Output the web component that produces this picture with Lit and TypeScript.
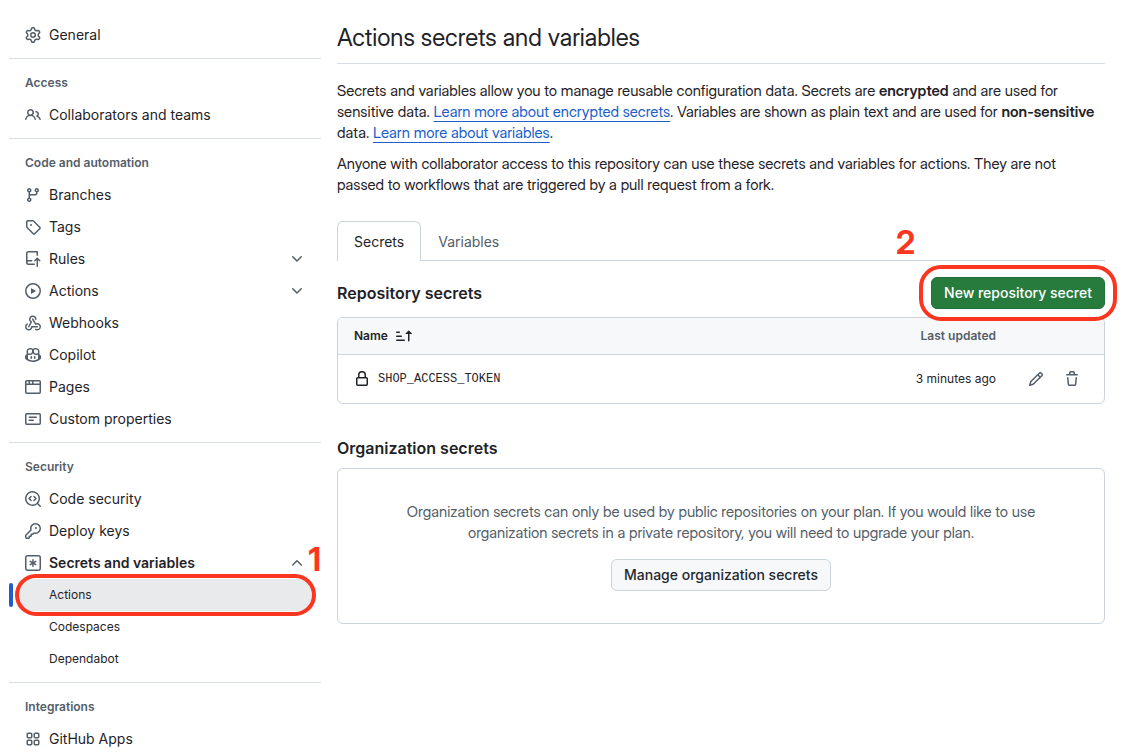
import { LitElement, html, css, svg, nothing } from "lit";
import { customElement, property } from "lit/decorators.js";
import { classMap } from "lit/directives/class-map.js";

const appTile = (x: number, y: number) =>
  `M${x} ${y + 1.75}c0-.966.784-1.75 1.75-1.75h2.5c.966 0 1.75.784 1.75 1.75v2.5a1.75 1.75 0 0 1-1.75 1.75h-2.5a1.75 1.75 0 0 1-1.75-1.75Zm1.75-.25a.25.25 0 0 0-.25.25v2.5c0 .138.112.25.25.25h2.5a.25.25 0 0 0 .25-.25v-2.5a.25.25 0 0 0-.25-.25Z`;

const ICONS: Record<string, string> = {
  gear: "M8 0a8.2 8.2 0 0 1 .701.031C9.444.095 9.99.645 10.16 1.29l.288 1.107c.018.066.079.158.212.224.231.114.454.243.668.386.123.082.233.09.299.071l1.103-.303c.644-.176 1.392.021 1.82.63.27.385.506.792.704 1.218.315.675.111 1.422-.364 1.891l-.814.806c-.049.048-.098.147-.088.294.016.257.016.515 0 .772-.01.147.038.246.088.294l.814.806c.475.469.679 1.216.364 1.891a7.977 7.977 0 0 1-.704 1.217c-.428.61-1.176.807-1.82.63l-1.102-.302c-.067-.019-.177-.011-.3.071a5.909 5.909 0 0 1-.668.386c-.133.066-.194.158-.211.224l-.29 1.106c-.168.646-.715 1.196-1.458 1.26a8.006 8.006 0 0 1-1.402 0c-.743-.064-1.289-.614-1.458-1.26l-.289-1.106c-.018-.066-.079-.158-.212-.224a5.738 5.738 0 0 1-.668-.386c-.123-.082-.233-.09-.299-.071l-1.103.303c-.644.176-1.392-.021-1.82-.63a8.12 8.12 0 0 1-.704-1.218c-.315-.675-.111-1.422.363-1.891l.815-.806c.05-.048.098-.147.088-.294a6.214 6.214 0 0 1 0-.772c.01-.147-.038-.246-.088-.294l-.815-.806C.635 6.045.431 5.298.746 4.623a7.92 7.92 0 0 1 .704-1.217c.428-.61 1.176-.807 1.82-.63l1.102.302c.067.019.177.011.3-.071.214-.143.437-.272.668-.386.133-.066.194-.158.211-.224l.29-1.106C6.009.645 6.556.095 7.299.03 7.53.01 7.764 0 8 0Zm-.571 1.525c-.036.003-.108.036-.137.146l-.289 1.105c-.147.561-.549.967-.998 1.189-.173.086-.34.183-.5.29-.417.278-.97.423-1.529.27l-1.103-.303c-.109-.03-.175.016-.195.045-.22.312-.412.644-.573.99-.014.031-.021.11.059.19l.815.806c.411.406.562.957.53 1.456a4.709 4.709 0 0 0 0 .582c.032.499-.119 1.05-.53 1.456l-.815.806c-.081.08-.073.159-.059.19.162.346.353.677.573.989.02.03.085.076.195.046l1.102-.303c.56-.153 1.113-.008 1.53.27.161.107.328.204.501.29.447.222.85.629.997 1.189l.289 1.105c.029.109.101.143.137.146a6.6 6.6 0 0 0 1.142 0c.036-.003.108-.036.137-.146l.289-1.105c.147-.561.549-.967.998-1.189.173-.086.34-.183.5-.29.417-.278.97-.423 1.529-.27l1.103.303c.109.029.175-.016.195-.045.22-.313.411-.644.573-.99.014-.031.021-.11-.059-.19l-.815-.806c-.411-.406-.562-.957-.53-1.456a4.709 4.709 0 0 0 0-.582c-.032-.499.119-1.05.53-1.456l.815-.806c.081-.08.073-.159.059-.19a6.464 6.464 0 0 0-.573-.989c-.02-.03-.085-.076-.195-.046l-1.102.303c-.56.153-1.113.008-1.53-.27a4.44 4.44 0 0 0-.501-.29c-.447-.222-.85-.629-.997-1.189l-.289-1.105c-.029-.11-.101-.143-.137-.146a6.6 6.6 0 0 0-1.142 0ZM11 8a3 3 0 1 1-6 0 3 3 0 0 1 6 0ZM9.5 8a1.5 1.5 0 1 0-3.001.001A1.5 1.5 0 0 0 9.5 8Z",
  people: "M2 5.5a3.5 3.5 0 1 1 5.898 2.549 5.508 5.508 0 0 1 3.034 4.084.75.75 0 1 1-1.482.235 4 4 0 0 0-7.9 0 .75.75 0 0 1-1.482-.236A5.507 5.507 0 0 1 3.102 8.05 3.493 3.493 0 0 1 2 5.5ZM11 4a3.001 3.001 0 0 1 2.22 5.018 5.01 5.01 0 0 1 2.56 3.012.749.749 0 0 1-.885.954.752.752 0 0 1-.549-.514 3.507 3.507 0 0 0-2.522-2.372.75.75 0 0 1-.574-.73v-.352a.75.75 0 0 1 .416-.672A1.5 1.5 0 0 0 11 5.5.75.75 0 0 1 11 4Zm-5.5-.5a2 2 0 1 0-.001 3.999A2 2 0 0 0 5.5 3.5Z",
  branch: "M9.5 3.25a2.25 2.25 0 1 1 3 2.122V6A2.5 2.5 0 0 1 10 8.5H6a1 1 0 0 0-1 1v1.128a2.251 2.251 0 1 1-1.5 0V5.372a2.25 2.25 0 1 1 1.5 0v1.836A2.493 2.493 0 0 1 6 7h4a1 1 0 0 0 1-1v-.628A2.25 2.25 0 0 1 9.5 3.25Zm-6 0a.75.75 0 1 0 1.5 0 .75.75 0 0 0-1.5 0Zm8.25-.75a.75.75 0 1 0 0 1.5.75.75 0 0 0 0-1.5ZM4.25 12a.75.75 0 1 0 0 1.5.75.75 0 0 0 0-1.5Z",
  tag: "M1 7.775V2.75C1 1.784 1.784 1 2.75 1h5.025c.464 0 .91.184 1.238.513l6.25 6.25a1.75 1.75 0 0 1 0 2.474l-5.026 5.026a1.75 1.75 0 0 1-2.474 0l-6.25-6.25A1.752 1.752 0 0 1 1 7.775Zm1.5 0c0 .066.026.13.073.177l6.25 6.25a.25.25 0 0 0 .354 0l5.025-5.025a.25.25 0 0 0 0-.354l-6.25-6.25a.25.25 0 0 0-.177-.073H2.75a.25.25 0 0 0-.25.25ZM6 5a1 1 0 1 1 0 2 1 1 0 0 1 0-2Z",
  repoPush: "M1 2.5A2.5 2.5 0 0 1 3.5 0h8.75a.75.75 0 0 1 .75.75v3.5a.75.75 0 0 1-1.5 0V1.5h-8a1 1 0 0 0-1 1v6.708A2.493 2.493 0 0 1 3.5 9h3.25a.75.75 0 0 1 0 1.5H3.5a1 1 0 0 0 0 2h5.75a.75.75 0 0 1 0 1.5H3.5A2.5 2.5 0 0 1 1 11.5v-9Zm13.23 7.79h-.001l-1.224-1.224v6.184a.75.75 0 0 1-1.5 0V9.066L10.28 10.29a.75.75 0 0 1-1.06-1.061l2.505-2.504a.75.75 0 0 1 1.06 0L15.29 9.23a.751.751 0 0 1-.018 1.042.751.751 0 0 1-1.042.018Z",
  play: "M8 0a8 8 0 1 1 0 16A8 8 0 0 1 8 0ZM1.5 8a6.5 6.5 0 1 0 13 0 6.5 6.5 0 0 0-13 0Zm4.879-2.773 4.264 2.559a.25.25 0 0 1 0 .428l-4.264 2.559A.25.25 0 0 1 6 10.559V5.442a.25.25 0 0 1 .379-.215Z",
  webhook: "M5.5 4.25a2.25 2.25 0 0 1 4.5 0 .75.75 0 0 0 1.5 0 3.75 3.75 0 1 0-6.14 2.889l-2.272 4.258a.75.75 0 0 0 1.324.706L7 7.25a.75.75 0 0 0-.309-1.015A2.25 2.25 0 0 1 5.5 4.25Z M7.364 3.607a.75.75 0 0 1 1.03.257l2.608 4.349a3.75 3.75 0 1 1-.628 6.785.75.75 0 0 1 .752-1.299 2.25 2.25 0 1 0-.033-3.88.75.75 0 0 1-1.03-.256L7.107 4.636a.75.75 0 0 1 .257-1.03Z M2.9 8.776A.75.75 0 0 1 2.625 9.8 2.25 2.25 0 1 0 6 11.75a.75.75 0 0 1 .75-.751h5.5a.75.75 0 0 1 0 1.5H7.425a3.751 3.751 0 1 1-5.55-3.998.75.75 0 0 1 1.024.274Z",
  copilot: "M7.998 15.035c-4.562 0-7.873-2.914-7.998-3.749V9.338c.085-.628.677-1.686 1.588-2.065.013-.07.024-.143.036-.218.029-.183.06-.384.126-.612-.201-.508-.254-1.084-.254-1.656 0-.87.128-1.769.693-2.484.579-.733 1.494-1.124 2.724-1.261 1.206-.134 2.262.034 2.944.765.05.053.096.108.139.165.044-.057.094-.112.143-.165.682-.731 1.738-.899 2.944-.765 1.23.137 2.145.528 2.724 1.261.566.715.693 1.614.693 2.484 0 .572-.053 1.148-.254 1.656.066.228.098.429.126.612.012.076.024.148.037.218.924.385 1.522 1.471 1.591 2.095v1.872c0 .766-3.351 3.795-8.002 3.795Zm0-1.485c2.28 0 4.584-1.11 5.002-1.433V7.862l-.023-.116c-.49.21-1.075.291-1.727.291-1.146 0-2.059-.327-2.71-.991A3.222 3.222 0 0 1 8 6.303a3.24 3.24 0 0 1-.544.743c-.65.664-1.563.991-2.71.991-.652 0-1.236-.081-1.727-.291l-.023.116v4.255c.419.323 2.722 1.433 5.002 1.433ZM6.762 2.83c-.193-.206-.637-.413-1.682-.297-1.019.113-1.479.404-1.713.7-.247.312-.369.789-.369 1.554 0 .793.129 1.171.308 1.371.162.181.519.379 1.442.379.853 0 1.339-.235 1.638-.54.315-.322.527-.827.617-1.553.117-.935-.037-1.395-.241-1.614Zm4.155-.297c-1.044-.116-1.488.091-1.681.297-.204.219-.359.679-.242 1.614.091.726.303 1.231.618 1.553.299.305.784.54 1.638.54.922 0 1.28-.198 1.442-.379.179-.2.308-.578.308-1.371 0-.765-.123-1.242-.37-1.554-.233-.296-.693-.587-1.713-.7Z M6.25 9.037a.75.75 0 0 1 .75.75v1.501a.75.75 0 0 1-1.5 0V9.787a.75.75 0 0 1 .75-.75Zm4.25.75v1.501a.75.75 0 0 1-1.5 0V9.787a.75.75 0 0 1 1.5 0Z",
  browser: "M0 2.75C0 1.784.784 1 1.75 1h12.5c.966 0 1.75.784 1.75 1.75v10.5A1.75 1.75 0 0 1 14.25 15H1.75A1.75 1.75 0 0 1 0 13.25ZM14.5 6h-13v7.25c0 .138.112.25.25.25h12.5a.25.25 0 0 0 .25-.25Zm-6-3.5v2h6V2.75a.25.25 0 0 0-.25-.25ZM5 2.5v2h2v-2Zm-3.25 0a.25.25 0 0 0-.25.25V4.5h2v-2Z",
  note: "M0 3.75C0 2.784.784 2 1.75 2h12.5c.966 0 1.75.784 1.75 1.75v8.5A1.75 1.75 0 0 1 14.25 14H1.75A1.75 1.75 0 0 1 0 12.25Zm1.75-.25a.25.25 0 0 0-.25.25v8.5c0 .138.112.25.25.25h12.5a.25.25 0 0 0 .25-.25v-8.5a.25.25 0 0 0-.25-.25ZM3.5 6.25a.75.75 0 0 1 .75-.75h7a.75.75 0 0 1 0 1.5h-7a.75.75 0 0 1-.75-.75Zm.75 2.25h4a.75.75 0 0 1 0 1.5h-4a.75.75 0 0 1 0-1.5Z",
  codescan: "M8.47 4.97a.75.75 0 0 0 0 1.06L9.94 7.5 8.47 8.97a.75.75 0 1 0 1.06 1.06l2-2a.75.75 0 0 0 0-1.06l-2-2a.75.75 0 0 0-1.06 0ZM6.53 6.03a.75.75 0 0 0-1.06-1.06l-2 2a.75.75 0 0 0 0 1.06l2 2a.75.75 0 1 0 1.06-1.06L5.06 7.5l1.47-1.47Z M12.246 13.307a7.5 7.5 0 1 1 1.06-1.06l2.474 2.473a.749.749 0 0 1-.326 1.275.749.749 0 0 1-.734-.215ZM1.5 7.5a6.002 6.002 0 0 0 3.608 5.504 6.002 6.002 0 0 0 6.486-1.117.748.748 0 0 1 .292-.293A6 6 0 1 0 1.5 7.5Z",
  key: "M10.5 0a5.499 5.499 0 1 1-1.288 10.848l-.932.932a.749.749 0 0 1-.53.22H7v.75a.749.749 0 0 1-.22.53l-.5.5a.749.749 0 0 1-.53.22H5v.75a.749.749 0 0 1-.22.53l-.5.5a.749.749 0 0 1-.53.22h-2A1.75 1.75 0 0 1 0 14.25v-2c0-.199.079-.389.22-.53l4.932-4.932A5.5 5.5 0 0 1 10.5 0Zm-4 5.5c-.001.431.069.86.205 1.269a.75.75 0 0 1-.181.768L1.5 12.56v1.69c0 .138.112.25.25.25h1.69l.06-.06v-1.19a.75.75 0 0 1 .75-.75h1.19l.06-.06v-1.19a.75.75 0 0 1 .75-.75h1.19l1.023-1.025a.75.75 0 0 1 .768-.18A4 4 0 1 0 6.5 5.5ZM11 6a1 1 0 1 1 0-2 1 1 0 0 1 0 2Z",
  asterisk: "M0 2.75A2.75 2.75 0 0 1 2.75 0h10.5A2.75 2.75 0 0 1 16 2.75v10.5A2.75 2.75 0 0 1 13.25 16H2.75A2.75 2.75 0 0 1 0 13.25ZM2.75 1.5c-.69 0-1.25.56-1.25 1.25v10.5c0 .69.56 1.25 1.25 1.25h10.5c.69 0 1.25-.56 1.25-1.25V2.75c0-.69-.56-1.25-1.25-1.25Z M8 4a.75.75 0 0 1 .75.75V6.7l1.69-.975a.75.75 0 0 1 .75 1.3L9.5 8l1.69.976a.75.75 0 0 1-.75 1.298L8.75 9.3v1.951a.75.75 0 0 1-1.5 0V9.299l-1.69.976a.75.75 0 0 1-.75-1.3L6.5 8l-1.69-.975a.75.75 0 0 1 .75-1.3l1.69.976V4.75A.75.75 0 0 1 8 4Z",
  apps: [appTile(1.5, 1.5), appTile(8.5, 1.5), appTile(1.5, 8.5), appTile(8.5, 8.5)].join(""),
  chevronDown: "M12.78 5.22a.749.749 0 0 1 0 1.06l-4.25 4.25a.749.749 0 0 1-1.06 0L3.22 6.28a.749.749 0 1 1 1.06-1.06L8 8.939l3.72-3.719a.749.749 0 0 1 1.06 0Z",
  chevronUp: "M3.22 10.53a.749.749 0 0 1 0-1.06l4.25-4.25a.749.749 0 0 1 1.06 0l4.25 4.25a.749.749 0 1 1-1.06 1.06L8 6.811 4.28 10.53a.749.749 0 0 1-1.06 0Z",
  lock: "M4 4a4 4 0 0 1 8 0v2h.25c.966 0 1.75.784 1.75 1.75v5.5A1.75 1.75 0 0 1 12.25 15h-8.5A1.75 1.75 0 0 1 2 13.25v-5.5C2 6.784 2.784 6 3.75 6H4Zm8.25 3.5h-8.5a.25.25 0 0 0-.25.25v5.5c0 .138.112.25.25.25h8.5a.25.25 0 0 0 .25-.25v-5.5a.25.25 0 0 0-.25-.25ZM10.5 6V4a2.5 2.5 0 1 0-5 0v2Z",
  pencil: "M11.013 1.427a1.75 1.75 0 0 1 2.474 0l1.086 1.086a1.75 1.75 0 0 1 0 2.474l-8.61 8.61c-.21.21-.47.364-.756.445l-3.251.93a.75.75 0 0 1-.927-.928l.929-3.25c.081-.286.235-.547.445-.758l8.61-8.61Zm.176 4.823L9.75 4.81l-6.286 6.287a.253.253 0 0 0-.064.108l-.558 1.953 1.953-.558a.253.253 0 0 0 .108-.064Zm1.238-3.763a.25.25 0 0 0-.354 0L10.811 3.75l1.439 1.44 1.263-1.263a.25.25 0 0 0 0-.354Z",
  trash: "M11 1.75V3h2.25a.75.75 0 0 1 0 1.5H2.75a.75.75 0 0 1 0-1.5H5V1.75C5 .784 5.784 0 6.75 0h2.5C10.216 0 11 .784 11 1.75ZM4.496 6.675l.66 6.6a.25.25 0 0 0 .249.225h5.19a.25.25 0 0 0 .249-.225l.66-6.6a.75.75 0 0 1 1.492.149l-.66 6.6A1.748 1.748 0 0 1 10.595 15h-5.19a1.75 1.75 0 0 1-1.741-1.575l-.66-6.6a.75.75 0 1 1 1.492-.15ZM6.5 1.75V3h3V1.75a.25.25 0 0 0-.25-.25h-2.5a.25.25 0 0 0-.25.25Z",
  sortAsc: "m12.927 2.573 3 3A.25.25 0 0 1 15.75 6H13.5v6.75a.75.75 0 0 1-1.5 0V6H9.75a.25.25 0 0 1-.177-.427l3-3a.25.25 0 0 1 .354 0ZM0 12.25a.75.75 0 0 1 .75-.75h7.5a.75.75 0 0 1 0 1.5H.75a.75.75 0 0 1-.75-.75Zm0-4a.75.75 0 0 1 .75-.75h4.5a.75.75 0 0 1 0 1.5H.75A.75.75 0 0 1 0 8.25Zm0-4a.75.75 0 0 1 .75-.75h2.5a.75.75 0 0 1 0 1.5H.75A.75.75 0 0 1 0 4.25Z",
};

const icon = (name: string) => html`
  <svg class="icon" width="16" height="16" viewBox="0 0 16 16" fill="currentColor" aria-hidden="true">
    ${svg`<path d=${ICONS[name]}></path>`}
  </svg>`;

const base = css`
  * {
    box-sizing: border-box;
  }
  .icon {
    display: block;
    flex: none;
  }
  .mark {
    position: absolute;
    border: 4px solid #fb3620;
    border-radius: 22px;
    pointer-events: none;
  }
  .step {
    position: absolute;
    color: #fb3620;
    font-family: "Inter Display", Inter, sans-serif;
    font-size: 32px;
    font-weight: 700;
    line-height: 32px;
    pointer-events: none;
  }
`;

interface NavItem {
  label: string;
  icon?: string;
  open?: boolean;
  group?: boolean;
  current?: boolean;
  children?: NavItem[];
}

interface NavSection {
  title?: string;
  items: NavItem[];
}

const SECTIONS: NavSection[] = [
  { items: [{ label: "General", icon: "gear" }] },
  { title: "Access", items: [{ label: "Collaborators and teams", icon: "people" }] },
  {
    title: "Code and automation",
    items: [
      { label: "Branches", icon: "branch" },
      { label: "Tags", icon: "tag" },
      { label: "Rules", icon: "repoPush", group: true },
      { label: "Actions", icon: "play", group: true },
      { label: "Webhooks", icon: "webhook" },
      { label: "Copilot", icon: "copilot" },
      { label: "Pages", icon: "browser" },
      { label: "Custom properties", icon: "note" },
    ],
  },
  {
    title: "Security",
    items: [
      { label: "Code security", icon: "codescan" },
      { label: "Deploy keys", icon: "key" },
      {
        label: "Secrets and variables",
        icon: "asterisk",
        group: true,
        open: true,
        children: [{ label: "Actions", current: true }, { label: "Codespaces" }, { label: "Dependabot" }],
      },
    ],
  },
  { title: "Integrations", items: [{ label: "GitHub Apps", icon: "apps" }] },
];

@customElement("settings-nav")
class SettingsNav extends LitElement {
  @property({ attribute: false }) sections: NavSection[] = [];

  static styles = [
    base,
    css`
      :host {
        display: block;
      }
      .section + .section {
        margin-top: 7px;
        padding-top: 8px;
        border-top: 1px solid #d8dee4;
      }
      .title {
        margin: 0;
        padding: 0 16px;
        font-size: 12px;
        line-height: 32px;
        font-weight: 600;
        color: #545e69;
      }
      .list {
        margin: 0;
        padding: 0;
        list-style: none;
      }
      .entry {
        position: relative;
      }
      .row {
        display: flex;
        align-items: center;
        gap: 8px;
        width: 100%;
        height: 32px;
        padding: 0 16px;
        border: 0;
        background: none;
        font: inherit;
        font-size: 14px;
        line-height: 20px;
        color: #1f2328;
        text-align: left;
        text-decoration: none;
      }
      .row .icon {
        color: #545e69;
      }
      .label {
        flex: 1;
      }
      .open {
        font-weight: 600;
      }
      .sub {
        margin: 0 8px;
        width: auto;
        padding: 0 32px;
        font-size: 12px;
        border-radius: 6px;
      }
      .current {
        background: #e9eaec;
      }
      .bar {
        position: absolute;
        left: 0;
        top: 4px;
        width: 4px;
        height: 24px;
        border-radius: 6px;
        background: #205ecb;
      }
      .mark {
        inset: -5px 5px -5px 6px;
      }
      .step {
        right: 0;
        top: -35px;
      }
    `,
  ];

  private renderItem(item: NavItem) {
    if (item.group) {
      return html`<li>
        <button class=${classMap({ row: true, open: !!item.open })} aria-expanded=${item.open ? "true" : "false"}>
          ${icon(item.icon!)}<span class="label">${item.label}</span>
          ${icon(item.open ? "chevronUp" : "chevronDown")}
        </button>
        ${item.children
          ? html`<ul class="list">${item.children.map((child) => this.renderChild(child))}</ul>`
          : nothing}
      </li>`;
    }
    return html`<li>
      <a class="row" href="#">${icon(item.icon!)}<span class="label">${item.label}</span></a>
    </li>`;
  }

  private renderChild(item: NavItem) {
    return html`<li class="entry">
      <a class=${classMap({ row: true, sub: true, current: !!item.current })} href="#">${item.label}</a>
      ${item.current
        ? html`<span class="bar"></span><span class="mark"></span><span class="step">1</span>`
        : nothing}
    </li>`;
  }

  render() {
    return html`<nav aria-label="Settings">
      ${this.sections.map(
        (section) => html`<section class="section">
          ${section.title ? html`<h2 class="title">${section.title}</h2>` : nothing}
          <ul class="list">${section.items.map((item) => this.renderItem(item))}</ul>
        </section>`
      )}
    </nav>`;
  }
}

interface Secret {
  name: string;
  updated: string;
}

@customElement("secrets-table")
class SecretsTable extends LitElement {
  @property({ attribute: false }) secrets: Secret[] = [];

  static styles = [
    base,
    css`
      :host {
        display: block;
        border: 1px solid #cbd3dc;
        border-radius: 6px;
        overflow: hidden;
      }
      .table {
        width: 100%;
        border-collapse: separate;
        border-spacing: 0;
        font-size: 12px;
        line-height: 18px;
      }
      .head {
        padding: 0;
        height: 37px;
        background: #f6f8fa;
        border-bottom: 1px solid #cbd3dc;
        font-weight: 600;
        color: #545e69;
        text-align: right;
      }
      .head.name {
        padding-left: 16px;
        text-align: left;
      }
      .sort {
        display: inline-flex;
        align-items: center;
        gap: 8px;
        padding: 0;
        border: 0;
        background: none;
        font: inherit;
        color: #1f2328;
      }
      .cell {
        padding: 0;
        height: 48px;
        text-align: right;
      }
      .secret {
        display: flex;
        align-items: center;
        gap: 8px;
        padding-left: 16px;
      }
      .code {
        font-family: "Liberation Mono", monospace;
        font-size: 12px;
      }
      .actions {
        width: 108px;
      }
      .tools {
        display: flex;
        justify-content: flex-end;
        gap: 4px;
        padding-right: 16px;
      }
      .tool {
        display: grid;
        place-items: center;
        width: 32px;
        height: 32px;
        padding: 0;
        border: 0;
        background: none;
        color: #545e69;
      }
    `,
  ];

  render() {
    return html`<table class="table">
      <thead>
        <tr>
          <th class="head name" scope="col"><button class="sort">Name ${icon("sortAsc")}</button></th>
          <th class="head" scope="col">Last updated</th>
          <th class="head actions" aria-label="Row actions"></th>
        </tr>
      </thead>
      <tbody>
        ${this.secrets.map(
          (secret) => html`<tr>
            <td class="cell">
              <div class="secret">${icon("lock")}<span class="code">${secret.name}</span></div>
            </td>
            <td class="cell">${secret.updated}</td>
            <td class="cell actions">
              <div class="tools">
                <button class="tool" aria-label="Edit">${icon("pencil")}</button>
                <button class="tool" aria-label="Delete">${icon("trash")}</button>
              </div>
            </td>
          </tr>`
        )}
      </tbody>
    </table>`;
  }
}

@customElement("app-root")
class AppRoot extends LitElement {
  static styles = [
    base,
    css`
      :host {
        display: grid;
        grid-template-columns: 312px minmax(0, 1fr);
        gap: 16px;
        min-height: 100vh;
        box-sizing: border-box;
        padding: 19px 26px 0 9px;
        background: #ffffff;
        color: #1f2328;
        font-family: Inter, "Liberation Sans", sans-serif;
        font-size: 14px;
        line-height: 21px;
      }
      .heading {
        margin: 0 0 16px;
        padding-bottom: 7px;
        border-bottom: 1px solid #d8dee4;
        font-family: "Inter Display", Inter, sans-serif;
        font-size: 24px;
        line-height: 37px;
        font-weight: 400;
      }
      .text {
        margin: 0 0 10px;
        font-family: "Inter Display", Inter, sans-serif;
        font-size: 15px;
      }
      .strong {
        font-weight: 600;
      }
      .link {
        color: #205ecb;
        text-decoration: underline;
        text-underline-offset: 4px;
      }
      .tabs {
        display: flex;
        margin: 26px 0 16px;
        border-bottom: 1px solid #cbd3dc;
      }
      .tab {
        height: 39px;
        padding: 0 16px;
        border: 1px solid transparent;
        border-bottom: 0;
        background: none;
        font: inherit;
        color: #545e69;
      }
      .tab.selected {
        height: 40px;
        margin-bottom: -1px;
        border-color: #cbd3dc;
        border-radius: 6px 6px 0 0;
        background: #ffffff;
        color: #1f2328;
      }
      .bar {
        display: flex;
        align-items: center;
        justify-content: space-between;
        margin-bottom: 8px;
      }
      .subhead {
        margin: 0;
        font-size: 16px;
        line-height: 24px;
        font-weight: 600;
      }
      .anchor {
        position: relative;
      }
      .anchor .mark {
        inset: -12px;
      }
      .anchor .step {
        left: -35px;
        top: -50px;
      }
      .button {
        display: block;
        height: 32px;
        padding: 0 12px;
        border: 1px solid #cbd3dc;
        border-radius: 6px;
        background: #f6f8fa;
        font: inherit;
        line-height: 20px;
        font-weight: 500;
        color: #25292e;
        white-space: nowrap;
      }
      .primary {
        border-color: #22703a;
        background: #277c3d;
        color: #ffffff;
      }
      .org {
        margin: 32px 0 8px;
      }
      .blank {
        display: flex;
        flex-direction: column;
        align-items: center;
        gap: 16px;
        padding: 32px;
        border: 1px solid #cbd3dc;
        border-radius: 6px;
        color: #545e69;
        text-align: center;
      }
      .blank .text {
        margin: 0;
        max-width: 640px;
      }
    `,
  ];

  render() {
    return html`
      <settings-nav .sections=${SECTIONS}></settings-nav>
      <main>
        <h1 class="heading">Actions secrets and variables</h1>
        <p class="text">
          Secrets and variables allow you to manage reusable configuration data. Secrets are
          <strong class="strong">encrypted</strong> and are used for sensitive data.
          <a class="link" href="#">Learn more about encrypted secrets</a>. Variables are shown as plain text and are
          used for <strong class="strong">non-sensitive</strong> data.
          <a class="link" href="#">Learn more about variables</a>.
        </p>
        <p class="text">
          Anyone with collaborator access to this repository can use these secrets and variables for actions. They are
          not passed to workflows that are triggered by a pull request from a fork.
        </p>
        <div class="tabs" role="tablist">
          <button class="tab selected" role="tab" aria-selected="true">Secrets</button>
          <button class="tab" role="tab" aria-selected="false">Variables</button>
        </div>
        <div class="bar">
          <h2 class="subhead">Repository secrets</h2>
          <div class="anchor">
            <button class="button primary">New repository secret</button>
            <span class="mark"></span>
            <span class="step">2</span>
          </div>
        </div>
        <secrets-table .secrets=${[{ name: "SHOP_ACCESS_TOKEN", updated: "3 minutes ago" }]}></secrets-table>
        <h2 class="subhead org">Organization secrets</h2>
        <div class="blank">
          <p class="text">
            Organization secrets can only be used by public repositories on your plan. If you would like to use
            organization secrets in a private repository, you will need to upgrade your plan.
          </p>
          <button class="button">Manage organization secrets</button>
        </div>
      </main>
    `;
  }
}
